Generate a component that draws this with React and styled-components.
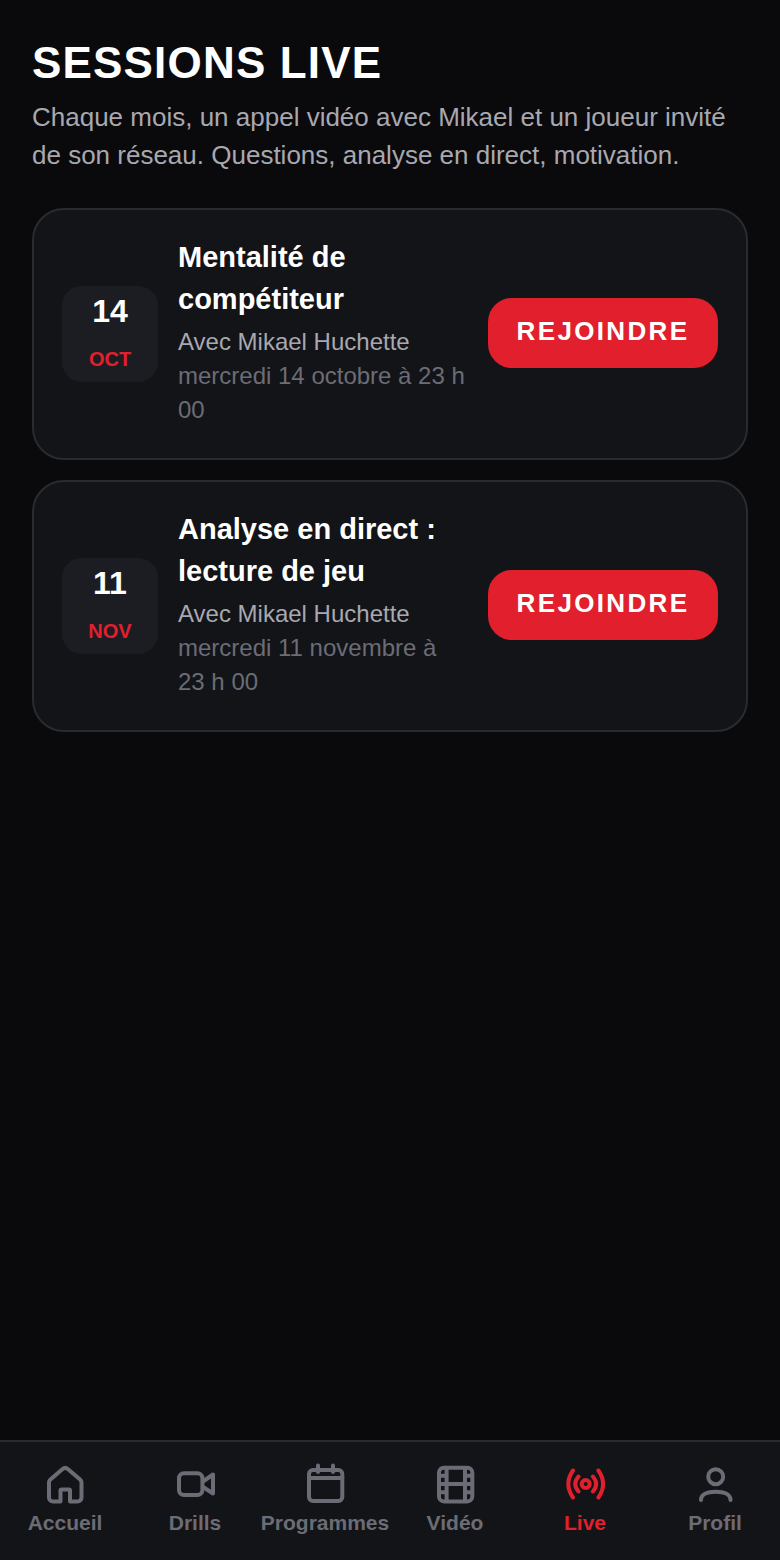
import React from 'react'
import styled, { createGlobalStyle } from 'styled-components'

const GlobalStyle = createGlobalStyle`
  html, body {
    margin: 0;
    padding: 0;
    background: #0a0a0c;
  }
  * {
    box-sizing: border-box;
  }
`

const Screen = styled.div`
  width: 780px;
  height: 1560px;
  display: flex;
  flex-direction: column;
  background: #0a0a0c;
  font-family: "Liberation Sans", Arial, sans-serif;
`

const Content = styled.main`
  flex: 1;
  padding: 37px 32px 0;
`

const Title = styled.h1`
  margin: 0;
  font-size: 44px;
  line-height: 52px;
  font-weight: 700;
  letter-spacing: 1.18px;
  color: #fff;
`

const Intro = styled.p`
  margin: 9px 0 34px;
  font-size: 26px;
  line-height: 38px;
  color: #a8a8b0;
`

const List = styled.div`
  display: flex;
  flex-direction: column;
  gap: 20px;
`

const Card = styled.article`
  display: flex;
  align-items: center;
  gap: 20px;
  padding: 26px 28px;
  background: #131418;
  border: 2px solid #2a2b32;
  border-radius: 32px;
`

const DateBox = styled.div`
  flex: none;
  width: 96px;
  height: 96px;
  padding-top: 5px;
  display: flex;
  flex-direction: column;
  align-items: center;
  background: #1c1d22;
  border-radius: 20px;
`

const Day = styled.div`
  font-size: 32px;
  line-height: 40px;
  font-weight: 700;
  color: #fff;
`

const Month = styled.div`
  margin-top: 16px;
  font-size: 20px;
  line-height: 24px;
  font-weight: 700;
  color: #e21f2d;
`

const Info = styled.div`
  flex: 1;
  min-width: 0;
  padding-bottom: 5px;
`

const Name = styled.div`
  font-size: 29px;
  line-height: 42px;
  font-weight: 700;
  color: #fff;
`

const Host = styled.div`
  margin-top: 5px;
  font-size: 24px;
  line-height: 34px;
  color: #a8a8b0;
`

const When = styled.div`
  font-size: 24px;
  line-height: 34px;
  color: #6b6c75;
`

const JoinButton = styled.button`
  flex: none;
  width: 230px;
  height: 70px;
  margin: 0 0 2px 2px;
  padding: 0 0 4px;
  border: 0;
  border-radius: 24px;
  background: #e21f2d;
  color: #fff;
  font-family: inherit;
  font-size: 26px;
  font-weight: 700;
  letter-spacing: 2.35px;
`

const Nav = styled.nav`
  flex: none;
  height: 120px;
  display: flex;
  background: #131418;
  border-top: 2px solid #2a2b32;
`

const NavItem = styled.div`
  flex: 1;
  display: flex;
  flex-direction: column;
  align-items: center;
  padding-top: 18px;
  color: ${props => (props.$active ? '#e21f2d' : '#6b6c75')};
`

const NavLabel = styled.span`
  font-size: 21px;
  line-height: 26px;
  font-weight: 700;
  white-space: nowrap;
`

const IconSvg = styled.svg`
  display: block;
  width: 50px;
  height: 50px;
  fill: none;
  stroke: currentColor;
  stroke-width: 4;
  stroke-linecap: round;
  stroke-linejoin: round;
`

const HomeIcon = () => (
  <IconSvg viewBox="0 0 50 50">
    <path d="M20.5 41.5V30.5a1 1 0 0 1 1-1h7.5a1 1 0 0 1 1 1V41.5H37.5a4 4 0 0 0 4-4V22.5a4 4 0 0 0-1.4-3L27.8 9a4 4 0 0 0-5.2 0L10.4 19.5a4 4 0 0 0-1.4 3V37.5a4 4 0 0 0 4 4Z" />
  </IconSvg>
)

const VideoIcon = () => (
  <IconSvg viewBox="0 0 50 50">
    <rect x="9" y="13.3" width="23.4" height="21.7" rx="5" />
    <path d="M33 21.5L43 14.5V33.5L33 27" />
  </IconSvg>
)

const CalendarIcon = () => (
  <IconSvg viewBox="0 0 50 50">
    <rect x="9" y="10" width="33.3" height="31" rx="4" />
    <path d="M9 18H42.3M18 5.5V12M33 5.5V12" />
  </IconSvg>
)

const FilmIcon = () => (
  <IconSvg viewBox="0 0 50 50">
    <rect x="9" y="7.7" width="33.3" height="33.7" rx="5" />
    <path d="M16.6 8V41M35 8V41M16.6 24H35M9 15.8H16.6M9 24H16.6M9 32.2H16.6M35 15.8H42.3M35 24H42.3M35 32.2H42.3" />
  </IconSvg>
)

const LiveIcon = () => (
  <IconSvg viewBox="0 0 50 50">
    <circle cx="25.7" cy="24" r="4" />
    <path d="M18.5 16.5Q12 24 18.5 31.5M32.9 16.5Q39.4 24 32.9 31.5M13 10.5Q3.6 24 13 37.5M38.4 10.5Q47.8 24 38.4 37.5" />
  </IconSvg>
)

const ProfileIcon = () => (
  <IconSvg viewBox="0 0 50 50">
    <circle cx="25.7" cy="16.7" r="7.5" />
    <path d="M11 40C11 34.5 17 31.7 25.7 31.7S40.5 34.5 40.5 40" />
  </IconSvg>
)

const sessions = [
  { day: '14', month: 'OCT', name: 'Mentalité de compétiteur', when: 'mercredi 14 octobre à 23 h 00' },
  { day: '11', month: 'NOV', name: 'Analyse en direct : lecture de jeu', when: 'mercredi 11 novembre à 23 h 00' },
]

const tabs = [
  { label: 'Accueil', icon: HomeIcon },
  { label: 'Drills', icon: VideoIcon },
  { label: 'Programmes', icon: CalendarIcon },
  { label: 'Vidéo', icon: FilmIcon },
  { label: 'Live', icon: LiveIcon, active: true },
  { label: 'Profil', icon: ProfileIcon },
]

export default function App() {
  return (
    <Screen>
      <GlobalStyle />
      <Content>
        <Title>SESSIONS LIVE</Title>
        <Intro>Chaque mois, un appel vidéo avec Mikael et un joueur invité de son réseau. Questions, analyse en direct, motivation.</Intro>
        <List>
          {sessions.map(s => (
            <Card key={s.day}>
              <DateBox>
                <Day>{s.day}</Day>
                <Month>{s.month}</Month>
              </DateBox>
              <Info>
                <Name>{s.name}</Name>
                <Host>Avec Mikael Huchette</Host>
                <When>{s.when}</When>
              </Info>
              <JoinButton type="button">REJOINDRE</JoinButton>
            </Card>
          ))}
        </List>
      </Content>
      <Nav>
        {tabs.map(({ label, icon: Icon, active }) => (
          <NavItem key={label} $active={active}>
            <Icon />
            <NavLabel>{label}</NavLabel>
          </NavItem>
        ))}
      </Nav>
    </Screen>
  )
}
